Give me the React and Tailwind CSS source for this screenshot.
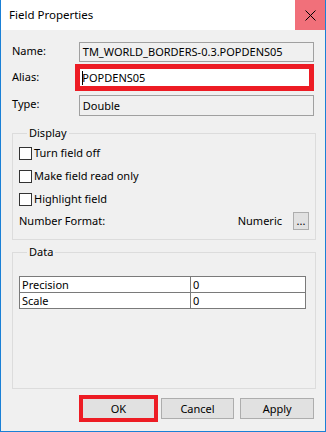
import React from 'react';

const font = { fontFamily: '"Noto Sans", "Liberation Sans", sans-serif' };

const Check = ({ label }) => (
  <div className="flex items-center gap-[2px] h-[16px]">
    <span className="w-[13px] h-[13px] border border-[#333333] bg-white shrink-0" />
    <span>{label}</span>
  </div>
);

const Btn = ({ children, className = '' }) => (
  <button className={`h-[21px] w-[74px] bg-[#e1e1e1] border border-[#adadad] text-[11px] text-black leading-none ${className}`}>
    {children}
  </button>
);

export default function App() {
  return (
    <div
      className="w-[326px] h-[432px] bg-[#f0f0f0] border-x border-b border-[#1a80d6] flex flex-col text-[11px] text-black leading-[16px]"
      style={font}
    >
      {/* title bar */}
      <div className="h-[30px] bg-white flex items-center justify-between shrink-0">
        <span className="pl-[8px] text-[11.5px]">Field Properties</span>
        <div className="w-[30px] h-[30px] bg-[#f1707a] flex items-center justify-center">
          <svg width="11" height="11" viewBox="0 0 11 11">
            <path d="M0.5 0.5 L10.5 10.5 M10.5 0.5 L0.5 10.5" stroke="#000" strokeWidth="1" />
          </svg>
        </div>
      </div>

      <div className="px-[11px] flex flex-col">
        {/* Name */}
        <div className="flex mt-[12px]">
          <span className="w-[67px] pt-[1px]">Name:</span>
          <div className="w-[236px] h-[20px] border border-[#a0a0a0] bg-[#f0f0f0] pl-[3px] flex items-center">
            TM_WORLD_BORDERS-0.3.POPDENS05
          </div>
        </div>

        {/* Alias */}
        <div className="flex mt-[2px]">
          <span className="w-[64px] pt-[5px]">Alias:</span>
          <div className="w-[241px] h-[27px] border-[5px] border-[#ed1c24] bg-white flex items-center pl-[2px]">
            <span className="w-px h-[14px] bg-black mr-[-1px]" />
            <span>POPDENS05</span>
          </div>
        </div>

        {/* Type */}
        <div className="flex mt-[4px]">
          <span className="w-[67px] pt-[1px]">Type:</span>
          <div className="w-[236px] h-[21px] border border-[#a0a0a0] bg-[#f0f0f0] pl-[3px] flex items-center">
            Double
          </div>
        </div>

        {/* Display */}
        <fieldset className="mt-[9px] border border-[#dcdcdc] w-[304px] pl-[6px] pr-[6px] pb-[9px]">
          <legend className="ml-[8px] px-[2px]">Display</legend>
          <div className="mt-[4px] flex flex-col gap-[7px]">
            <Check label="Turn field off" />
            <Check label="Make field read only" />
            <Check label="Highlight field" />
          </div>
          <div className="mt-[5px] h-[18px] flex items-center">
            <span className="flex-1">Number Format:</span>
            <span className="mr-[11px]">Numeric</span>
            <button className="w-[16px] h-[18px] bg-[#e1e1e1] border border-[#adadad] text-[11px] leading-none flex items-end justify-center pb-[3px]">
              ...
            </button>
          </div>
        </fieldset>

        {/* Data */}
        <fieldset className="mt-[4px] border border-[#dcdcdc] w-[304px] pl-[6px] pb-[79px]">
          <legend className="ml-[8px] px-[2px]">Data</legend>
          <table className="mt-[16px] w-[287px] border-collapse bg-white">
            <tbody>
              <tr className="h-[16px]">
                <td className="w-[171px] border border-[#7a7a7a] pl-[2px] py-0 leading-[15px]">Precision</td>
                <td className="border border-[#7a7a7a] pl-[2px] py-0 leading-[15px]">0</td>
              </tr>
              <tr className="h-[16px]">
                <td className="border border-[#7a7a7a] pl-[2px] py-0 leading-[15px]">Scale</td>
                <td className="border border-[#7a7a7a] pl-[2px] py-0 leading-[15px]">0</td>
              </tr>
            </tbody>
          </table>
        </fieldset>

        {/* buttons */}
        <div className="flex items-center mt-[6px] pl-[67px]">
          <div className="w-[79px] h-[27px] border-[4px] border-[#ed1c24] bg-[#e1e1e1] flex items-center justify-center">
            OK
          </div>
          <Btn className="ml-[3px]">Cancel</Btn>
          <Btn className="ml-[6px]">Apply</Btn>
        </div>
      </div>
    </div>
  );
}
